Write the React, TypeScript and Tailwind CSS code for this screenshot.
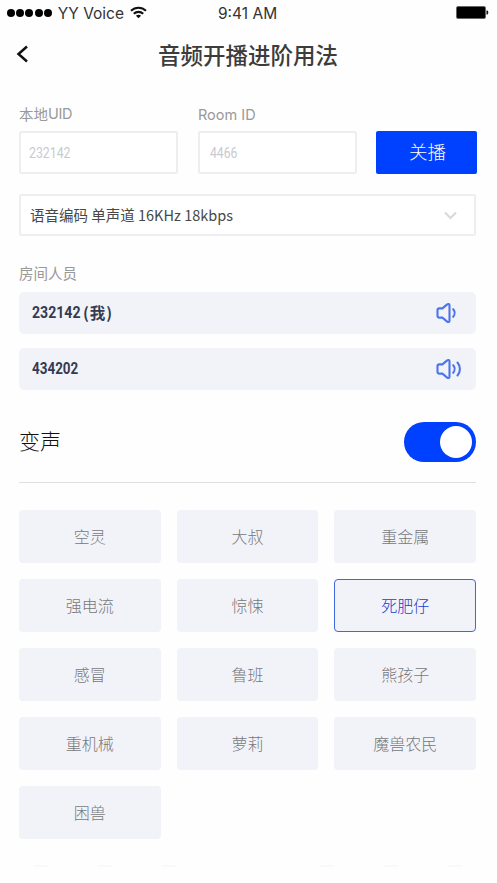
import type { ReactNode } from 'react';

const voices = [
  '空灵', '大叔', '重金属',
  '强电流', '惊悚', '死肥仔',
  '感冒', '鲁班', '熊孩子',
  '重机械', '萝莉', '魔兽农民',
  '困兽',
];

function StatusBar() {
  return (
    <div className="flex h-[26px] items-center font-['Inter',sans-serif] text-[15.5px] text-[#333]">
      <div className="flex w-[210px] items-center pl-[7px]">
        <div className="flex gap-[1.2px]">
          {[0, 1, 2, 3, 4].map((n) => (
            <span key={n} className="size-[8px] rounded-full bg-black" />
          ))}
        </div>
        <span className="ml-[6px] w-[67px] pt-px whitespace-nowrap">YY Voice</span>
        <svg className="mb-[2px] ml-[5px]" width="17" height="13" viewBox="0 0 17 13" fill="none" stroke="#111" strokeWidth="2.1">
          <path d="M1 4.8C5.2.7 11.8.7 16 4.8" />
          <path d="M3.8 7.8c2.6-2.6 6.8-2.6 9.4 0" />
          <path d="M8.5 12.2 5.9 9.7c1.5-1.2 3.7-1.2 5.2 0z" fill="#111" stroke="none" />
        </svg>
      </div>
      <span className="ml-[8px] pt-px whitespace-nowrap">9:41 AM</span>
      <svg className="mr-[8px] mb-px ml-auto" width="33" height="13" viewBox="0 0 33 13">
        <rect x=".5" y=".5" width="29" height="12" rx="1.5" fill="#000" stroke="#666" />
        <path d="M30.5 4.2c2.4.5 2.4 4.1 0 4.6z" fill="#111" />
      </svg>
    </div>
  );
}

function Speaker({ loud = false }: { loud?: boolean }) {
  return (
    <svg className="ml-auto" width="28" height="24" viewBox="0 0 28 24" fill="none" stroke="#4b75e8" strokeWidth="2.1" strokeLinecap="round" strokeLinejoin="round">
      <path d="M5.3 7.4h3.1l4.8-4c1-.8 2.3-.5 2.3.8v15.600c0 1.300-1.300 1.600-2.300.8l-4.800-4H5.300C4.200 16.600 3.500 16 3.500 15V9c0-1 .7-1.600 1.800-1.600z" />
      <path d="M19.200 8.200c1.800 2.100 1.800 5.500 0 7.600" />
      {loud && <path d="M23.500 5.500c3.200 3.700 3.200 9.300 0 13" />}
    </svg>
  );
}

function Member({ children, loud }: { children: ReactNode; loud?: boolean }) {
  return (
    <div className="flex h-[42px] items-center rounded-[5px] bg-[#f2f3f8] pr-[14px] pl-[13px]">
      <div className="flex items-center text-[#343b52]">{children}</div>
      <Speaker loud={loud} />
    </div>
  );
}

export default function App() {
  return (
    <div className="h-[883px] w-[497px] overflow-hidden bg-[#fefefe] font-['Noto_Sans_CJK_SC',sans-serif]">
      <StatusBar />
      <header className="flex h-[58px] items-center pl-[16px]">
        <svg className="mb-[2px]" width="13" height="18" viewBox="0 0 13 18" fill="none" stroke="#111" strokeWidth="2.5">
          <path d="M11 1.500 2.500 9l8.500 7.500" />
        </svg>
        <h1 className="w-[438px] text-center text-[22.500px] font-medium text-[#3c3c3c]">音频开播进阶用法</h1>
      </header>

      <main className="pr-[21px] pl-[19px]">
        <div className="flex items-end pt-[16px]">
          <label className="mr-[20px] w-[159px]">
            <span className="flex h-[31px] items-center pb-[3px] text-[14.500px] text-[#999]">
              本地<span className="font-['Inter',sans-serif] tracking-tight">UID</span>
            </span>
            <span className="flex h-[43px] items-center rounded-[2px] border-2 border-[#eeeef1] bg-white pt-px pl-[8px] font-['Roboto',sans-serif] text-[14px] text-[#c9cad0]">
              <span className="origin-left scale-x-[.88]">232142</span>
            </span>
          </label>
          <label className="mr-[19px] w-[159px]">
            <span className="flex h-[31px] items-center pb-[2px] font-['Inter',sans-serif] text-[14.500px] text-[#999]">Room ID</span>
            <span className="flex h-[43px] items-center rounded-[2px] border-2 border-[#eeeef1] bg-white pt-px pl-[10px] font-['Roboto',sans-serif] text-[14px] text-[#c9cad0]">
              <span className="origin-left scale-x-[.87]">4466</span>
            </span>
          </label>
          <button className="-mr-px h-[43px] flex-1 rounded-[2px] bg-[#0040ff] pb-[2px] pl-[2px] text-[18.500px] font-light text-white">关播</button>
        </div>

        <div className="mt-[20px] flex h-[42px] items-center rounded-[2px] border-2 border-[#eeeef1] bg-white pr-[17px] pl-[9px] text-[14.500px] text-[#484848]">
          <span>语音编码 单声道 16KHz 18kbps</span>
          <svg className="ml-auto" width="13" height="9" viewBox="0 0 13 9" fill="none" stroke="#d7d8dc" strokeWidth="2">
            <path d="m1 1.500 5.500 5.500L12 1.500" />
          </svg>
        </div>

        <h2 className="flex h-[56px] items-end pb-[8px] text-[14.500px] text-[#999]">房间人员</h2>
        <div className="flex flex-col gap-[14px]">
          <Member>
            <span className="w-[51px] origin-left scale-x-[.88] font-['Roboto',sans-serif] text-[16px] font-bold">232142</span>
            <span className="text-[15.500px] font-bold tracking-[1px]">(我)</span>
          </Member>
          <Member loud>
            <span className="origin-left scale-x-[.84] font-['Roboto',sans-serif] text-[16px] font-bold">434202</span>
          </Member>
        </div>

        <section className="mt-[12px] flex h-[81px] items-center justify-between border-b border-[#dfdfe1]">
          <h2 className="pb-[2px] text-[21px] font-light text-[#111]">变声</h2>
          <button role="switch" aria-checked="true" aria-label="变声" className="flex h-[40px] w-[72px] items-center justify-end rounded-full bg-[#0040ff] pr-[4px]">
            <span className="size-[32px] rounded-full bg-white" />
          </button>
        </section>

        <div className="mt-[27px] grid grid-cols-3 gap-[16px] text-[16px] font-light text-[#77787c]">
          {voices.map((voice) => (
            <button
              key={voice}
              className={
                voice === '死肥仔'
                  ? 'h-[53px] rounded-[4px] border border-[#3f68dc] bg-[#f2f3f8] pb-px text-[#1540d0]'
                  : 'h-[53px] rounded-[4px] bg-[#f2f3f8] pb-px'
              }
            >
              {voice}
            </button>
          ))}
        </div>

        <div className="mt-[26px] flex h-[2px] gap-[50px] pl-[15px]">
          <span className="w-[14px] rounded-full bg-[#f9f9f9]" />
          <span className="w-[14px] rounded-full bg-[#f9f9f9]" />
          <span className="w-[14px] rounded-full bg-[#f9f9f9]" />
          <span className="ml-[94px] w-[14px] rounded-full bg-[#f9f9f9]" />
          <span className="w-[14px] rounded-full bg-[#f9f9f9]" />
          <span className="w-[14px] rounded-full bg-[#f9f9f9]" />
        </div>
      </main>
    </div>
  );
}
